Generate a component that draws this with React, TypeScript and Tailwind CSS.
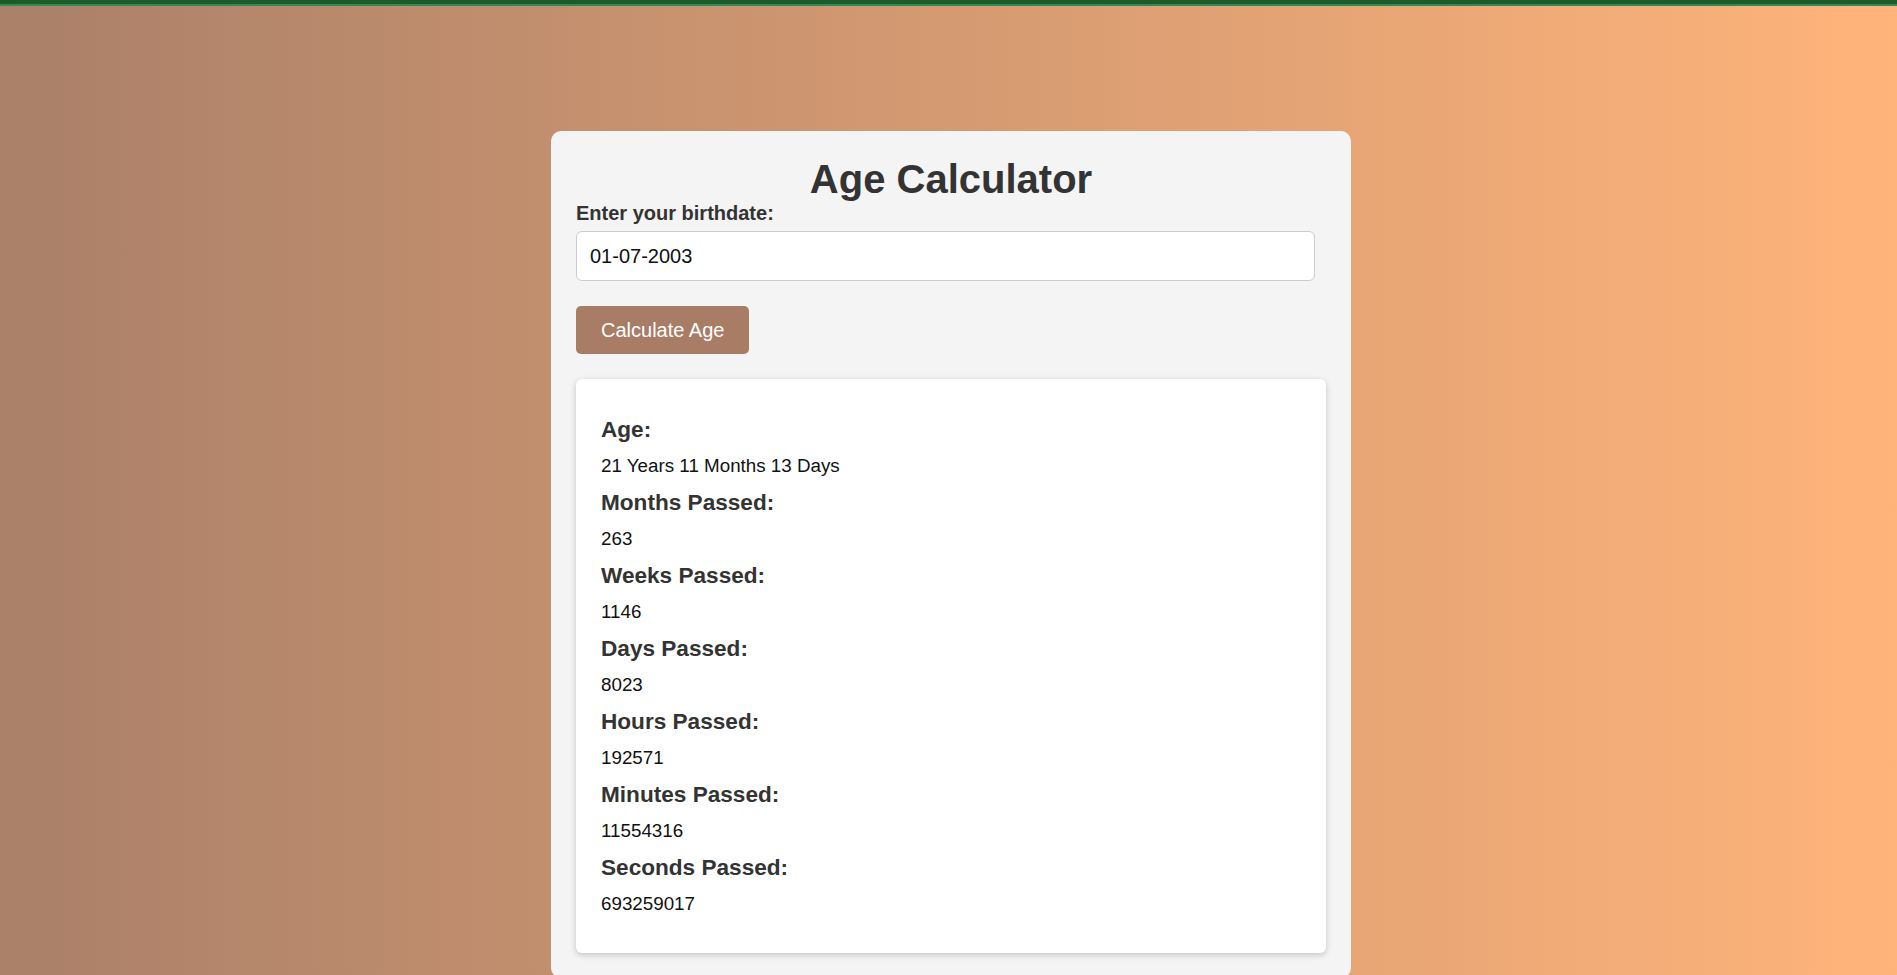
import React from 'react'

const results = [
  { label: 'Age:', value: '21 Years 11 Months 13 Days' },
  { label: 'Months Passed:', value: '263' },
  { label: 'Weeks Passed:', value: '1146' },
  { label: 'Days Passed:', value: '8023' },
  { label: 'Hours Passed:', value: '192571' },
  { label: 'Minutes Passed:', value: '11554316' },
  { label: 'Seconds Passed:', value: '693259017' },
]

export default function App() {
  return (
    <main className="min-h-screen bg-[linear-gradient(to_right,#aa8069,#ffb47a)] font-['Liberation_Sans',Arial,sans-serif]">
      {/* top strip */}
      <div className="h-[4px] bg-[#1f5a2a]" />
      <div className="h-[2px] bg-[#2e8b57]" />

      {/* Calculator card */}
      <div className="pl-[5px] pt-[125px]">
        <div className="mx-auto w-[800px] rounded-[10px] bg-[#f4f4f4] p-[25px]">
          <h1 className="text-center text-[40px] leading-[46px] font-bold text-[#333]">Age Calculator</h1>

          <label className="block text-[20px] leading-[23px] font-bold text-[#333]">Enter your birthdate:</label>
          <input
            type="text"
            value="01-07-2003"
            readOnly
            className="mt-[6px] block h-[50px] w-[739px] rounded-[6px] border border-[#ccc] bg-white px-[13px] text-[20px] text-[#111] outline-none"
          />

          <button className="mt-[25px] block h-[48px] rounded-[5px] bg-[#a97c66] px-[25px] text-[20px] text-white">
            Calculate Age
          </button>

          {/* Results */}
          <div className="mt-[25px] rounded-[6px] bg-white px-[25px] py-[25px] shadow-[0_2px_6px_rgba(0,0,0,0.2)]">
            {results.map((r) => (
              <div key={r.label}>
                <h3 className="my-[12.5px] text-[22.6px] leading-[25px] font-bold text-[#333]">{r.label}</h3>
                <p className="my-[12.5px] text-[18.8px] leading-[23px] text-[#111]">{r.value}</p>
              </div>
            ))}
          </div>
        </div>
      </div>
    </main>
  )
}
